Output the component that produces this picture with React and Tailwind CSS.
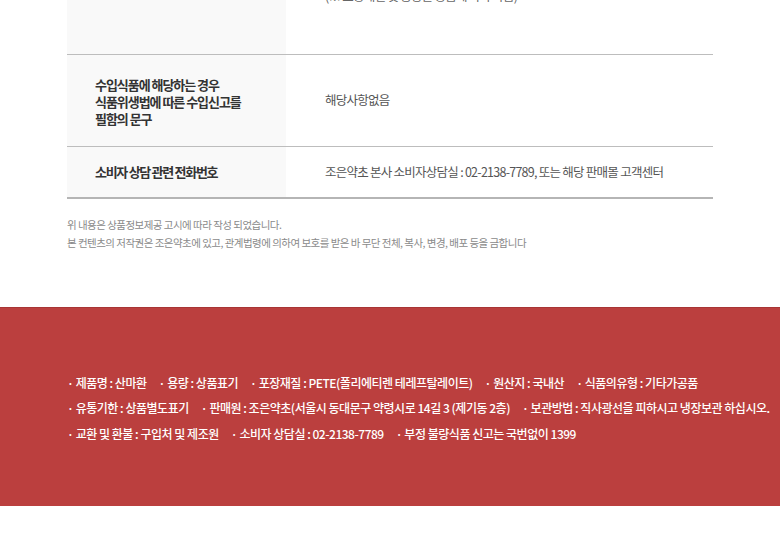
export default function App() {
  const font = { fontFamily: '"Noto Sans CJK KR", "Noto Sans", sans-serif' };
  const row1 = [
    "· 제품명 : 산마환",
    "· 용량 : 상품표기",
    "· 포장재질 : PETE(폴리에티렌 테레프탈레이트)",
    "· 원산지 : 국내산",
    "· 식품의유형 : 기타가공품",
  ];
  const row2 = [
    "· 유통기한 : 상품별도표기",
    "· 판매원 : 조은약초(서울시 동대문구 약령시로 14길 3 (제기동 2층)",
    "· 보관방법 : 직사광선을 피하시고 냉장보관 하십시오.",
  ];
  const row3 = [
    "· 교환 및 환불 : 구입처 및 제조원",
    "· 소비자 상담실 : 02-2138-7789",
    "· 부정 불량식품 신고는 국번없이 1399",
  ];
  const Line = ({ items }) => (
    <div className="flex gap-[12px] whitespace-nowrap h-[25.5px] items-center">
      {items.map((t) => (
        <span key={t}>{t}</span>
      ))}
    </div>
  );
  return (
    <div className="w-[780px] h-[537px] overflow-hidden bg-white" style={font}>
      <div className="pl-[67px] w-[713px]">
        <div className="flex h-[55px] border-b border-[#bdbdbd]">
          <div className="w-[219px] bg-[#f9f9f9]"></div>
          <div className="flex-1 pl-[39px] overflow-hidden">
            <div className="mt-[-12px] text-[12.5px] text-[#666] tracking-[-0.06em] leading-[16px]">
              (※ 포장재질 및 용량은 상품에 따라 다름)
            </div>
          </div>
        </div>
        <div className="flex h-[92px] border-b border-[#bdbdbd]">
          <div className="w-[219px] bg-[#f9f9f9] pl-[28px] flex items-center">
            <div className="text-[13px] font-bold text-[#333] leading-[17px] tracking-[-0.08em] mt-[2px]">
              수입식품에 해당하는 경우
              <br />
              식품위생법에 따른 수입신고를
              <br />
              필함의 문구
            </div>
          </div>
          <div className="flex-1 pl-[39px] flex items-center text-[12.5px] text-[#555] tracking-[-0.06em]">
            해당사항없음
          </div>
        </div>
        <div className="flex h-[52px] border-b-2 border-[#b5b5b5]">
          <div className="w-[219px] bg-[#f9f9f9] pl-[28px] flex items-center text-[13px] font-bold text-[#333] tracking-[-0.1em]">
            소비자 상담 관련 전화번호
          </div>
          <div className="flex-1 pl-[39px] flex items-center text-[12.5px] text-[#555] tracking-[-0.06em]">
            조은약초 본사 소비자상담실 : 02-2138-7789, 또는 해당 판매몰 고객센터
          </div>
        </div>
        <div className="pt-[17px] text-[10.5px] text-[#8a8a8a] leading-[18px] tracking-[-0.05em]">
          <div>위 내용은 상품정보제공 고시에 따라 작성 되었습니다.</div>
          <div>
            본 컨텐츠의 저작권은 조은약초에 있고, 관계법령에 의하여 보호를 받은 바 무단 전체, 복사, 변경, 배포 등을 금합니다
          </div>
        </div>
      </div>
      <div className="mt-[55px] h-[199px] bg-[#bb3f3e] border-t border-[#a83535] pt-[62px] pl-[67px] text-white text-[12px] font-medium tracking-[-0.04em]">
        <Line items={row1} />
        <Line items={row2} />
        <Line items={row3} />
      </div>
    </div>
  );
}
